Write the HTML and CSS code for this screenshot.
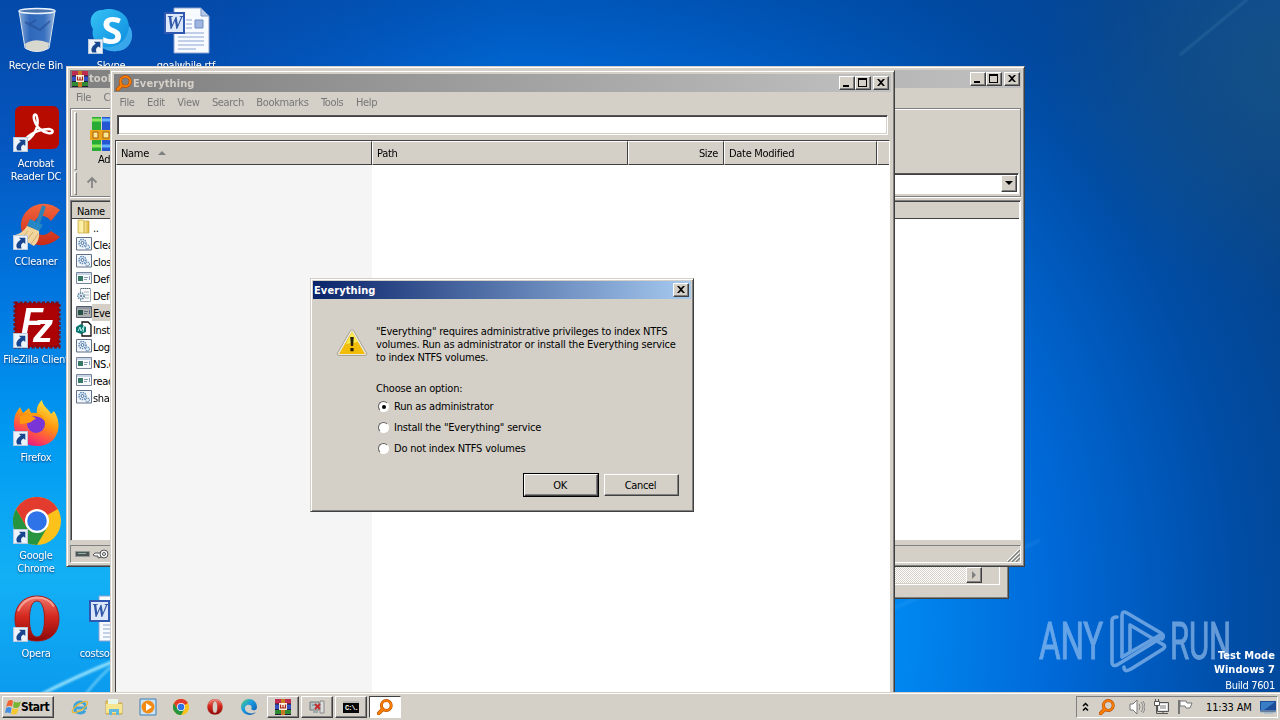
FILE: index.html
```
<!DOCTYPE html>
<html lang="en">
<head>
    <meta charset="UTF-8">
    <meta name="viewport" content="width=device-width, initial-scale=1.0">
    <title>Everything</title>
    <link rel="stylesheet" href="styles.css">
</head>
<body>
    <!-- Shared icons -->
    <svg class="defs" width="0" height="0">
        <defs>
            <linearGradient id="red" x1="0" y1="0" x2="0" y2="1"><stop offset="0" stop-color="#f07a6c"/><stop offset=".45" stop-color="#d5291f"/><stop offset="1" stop-color="#8b0808"/></linearGradient>
            <linearGradient id="orange" x1="0" y1="0" x2="0" y2="1"><stop offset="0" stop-color="#f2653d"/><stop offset="1" stop-color="#c92a17"/></linearGradient>
            <linearGradient id="sky" x1="0" y1="0" x2="1" y2="1"><stop offset="0" stop-color="#35c3f5"/><stop offset="1" stop-color="#0a86dc"/></linearGradient>
            <linearGradient id="glass" x1="0" y1="0" x2="1" y2="0"><stop offset="0" stop-color="#a9c3e4" stop-opacity=".85"/><stop offset=".3" stop-color="#4d7cc4" stop-opacity=".6"/><stop offset=".7" stop-color="#5d8acb" stop-opacity=".6"/><stop offset="1" stop-color="#c2d4ea" stop-opacity=".8"/></linearGradient>
            <linearGradient id="fire" x1=".8" y1="0" x2=".3" y2="1"><stop offset="0" stop-color="#fff04d"/><stop offset=".45" stop-color="#ff980e"/><stop offset=".75" stop-color="#ff4a4f"/><stop offset="1" stop-color="#e31587"/></linearGradient>
            <linearGradient id="gold" x1="0" y1="0" x2="1" y2="0"><stop offset="0" stop-color="#f8e690"/><stop offset=".5" stop-color="#fff6b8"/><stop offset="1" stop-color="#d9ae2d"/></linearGradient>
            <linearGradient id="edge" x1="0" y1="0" x2="1" y2="1"><stop offset="0" stop-color="#56d364"/><stop offset=".4" stop-color="#1b9de2"/><stop offset="1" stop-color="#0c52a5"/></linearGradient>
        </defs>
        <symbol id="shortcut" viewBox="0 0 14 14">
            <path d="M.5.5h13v13H.5z" fill="#edf3fa" stroke="#bac9dc"/>
            <path d="M5.500 2.500h6V8.500L9.900 7C7.500 8 7 10 8 12.500H4C2 9.500 4 6.500 7.300 4.500z" fill="#17468f"/>
        </symbol>
        <symbol id="magnifier" viewBox="0 0 16 16">
            <path d="M5.400 10.600 1.800 14.300" stroke="#b84d00" stroke-width="3.800" stroke-linecap="round"/>
            <circle cx="9.300" cy="6.500" r="4.900" fill="none" stroke="#b84d00" stroke-width="3"/>
            <path d="M5.400 10.600 1.800 14.300" stroke="#ff8000" stroke-width="2.400" stroke-linecap="round"/>
            <circle cx="9.300" cy="6.500" r="4.900" fill="none" stroke="#ff8000" stroke-width="1.800"/>
        </symbol>
        <symbol id="winrar" viewBox="0 0 16 16">
            <path d="M0 0h16v5H0z" fill="#c02c50"/><path d="M0 5h16v5H0z" fill="#354fc0"/><path d="M0 11h16v5H0z" fill="#2f8a35"/>
            <path d="M0 4.500h16v1H0zM0 10h16v1H0zM0 15h16v1H0z" fill="#251b32"/>
            <path d="M6 0h4v16H6z" fill="#c87a23"/><path d="M4 4h8v7H4z" fill="#fbf1dc"/><path d="M5.500 5.500V9h5V5.500M8 6v3" fill="none" stroke="#a3231b" stroke-width="1.200"/>
        </symbol>
        <symbol id="chrome" viewBox="0 0 48 48">
            <circle cx="24" cy="24" r="24" fill="#fbc21b"/>
            <path d="M24 24 3.200 12A24 24 0 0 1 44.800 12z" fill="#e33b2e"/>
            <path d="M3.200 12A24 24 0 0 0 24 48L34.400 30 24 24 13.600 30z" fill="#27943f"/>
            <path d="M3.200 12H24v12L13.600 30z" fill="#e33b2e"/>
            <circle cx="24" cy="24" r="12" fill="#fff"/><circle cx="24" cy="24" r="9.800" fill="#2f73e8"/>
        </symbol>
        <symbol id="opera" viewBox="0 0 48 48">
            <path fill-rule="evenodd" d="M24 1C10 1 2 11 2 24s8 22 22 22 22-9 22-22S38 1 24 1zm0 5c5 0 7.500 7 7.500 18S29 42 24 42s-7.500-7-7.500-18S19 6 24 6z" fill="url(#red)" stroke="#a71813"/>
            <path d="M5 16Q10 4 23 2.500q13 0 18 9" fill="none" stroke="#ffc8bf" stroke-width="2" opacity=".6"/>
        </symbol>
        <symbol id="word" viewBox="0 0 48 48">
            <path d="M11 1h27l8 8v37H11z" fill="#f7faff" stroke="#8da3cf"/><path d="M38 1v8h8z" fill="#b4c8e8" stroke="#7c94c2"/>
            <path d="M32 13h8v8h-8z" fill="#9eb6df" stroke="#6f8cc4"/><path d="M23 13h6M23 17h6M23 21h6M15 26h26M15 30h26M15 34h26M15 38h26M15 42h18" stroke="#8ba4d0"/>
            <path d="M2 6h19v20H2z" fill="#dce7fa" stroke="#3158b0" stroke-width="2"/>
            <text x="11.500" y="22" class="word-w">W</text>
        </symbol>
        <symbol id="gears" viewBox="0 0 16 14">
            <path d="M.5.5h15v12.500H.5z" fill="#f3f7fb" stroke="#5f6f88"/>
            <circle cx="6.500" cy="6" r="3.500" fill="none" stroke="#5c86b5" stroke-width="1.500" stroke-dasharray="1.500 .8"/><circle cx="6.500" cy="6" r="1.500" fill="none" stroke="#416d9e"/>
            <circle cx="11.500" cy="10" r="2" fill="#dcecf8" stroke="#416d9e" stroke-dasharray="1.200 .6"/>
        </symbol>
        <symbol id="exe" viewBox="0 0 16 14">
            <path d="M.5 1.500h15v11H.5z" fill="#f7f9fb" stroke="#77859c"/><path d="M1 2h14v2H1z" fill="#cad6e6"/>
            <path d="M2 5h5v5H2z" fill="#367767"/><path d="M8 6.500h4M8 8.500h3M13.500 5v4" stroke="#8ba0b5"/>
        </symbol>
        <symbol id="ini" viewBox="0 0 16 16">
            <path d="M4.500 1.500h10v13h-10z" fill="#f9fafb" stroke="#9ca7b2"/><path d="M5 1.500h9" stroke="#566" stroke-dasharray="1 1"/>
            <path d="M8 5h5M9 8h4M9 11h4" stroke="#a5b2bf"/><circle cx="5" cy="9" r="3" fill="#e6f3f8" stroke="#6c93a7" stroke-width="2" stroke-dasharray="1.300 .8"/><circle cx="5" cy="9" r="1" fill="#668"/>
        </symbol>
        <symbol id="minimize" viewBox="0 0 12 10"><path d="M2 7h6v2H2z"/></symbol>
        <symbol id="maximize" viewBox="0 0 12 10"><path d="M1 0h9v9H1zM2 2v6h7V2z" fill-rule="evenodd"/></symbol>
        <symbol id="close" viewBox="0 0 12 10"><path d="M2 1h2l2 2 2-2h2L7 4.500 10 8H8L6 6 4 8H2l3-3.500z"/></symbol>
    </svg>

    <div class="desktop">
        <svg class="wallpaper" viewBox="0 0 1280 720">
            <defs>
                <radialGradient id="glow" gradientUnits="userSpaceOnUse" cx="480" cy="620" r="900"><stop offset="0" stop-color="#14b0f8"/><stop offset=".45" stop-color="#008af2"/><stop offset=".64" stop-color="#0069d8"/><stop offset=".84" stop-color="#004da6"/><stop offset="1" stop-color="#064288"/></radialGradient>
                <linearGradient id="left" x1="0" y1="0" x2="0" y2="1"><stop offset="0" stop-color="#064db0"/><stop offset=".2" stop-color="#0556c0"/><stop offset=".4" stop-color="#0075de"/><stop offset=".6" stop-color="#0099f1"/><stop offset=".8" stop-color="#13b0f5"/><stop offset="1" stop-color="#0996ed"/></linearGradient>
                <linearGradient id="top" x1="0" y1="0" x2="0" y2="1"><stop offset="0" stop-color="#0046a0" stop-opacity=".4"/><stop offset="1" stop-color="#0046a0" stop-opacity="0"/></linearGradient>
                <linearGradient id="fade" x1="0" y1="0" x2="1" y2="0"><stop offset="0" stop-color="#fff"/><stop offset=".4" stop-color="#fff"/><stop offset="1" stop-color="#000"/></linearGradient>
                <mask id="leftMask"><path d="M0 0h500v720H0z" fill="url(#fade)"/></mask>
                <radialGradient id="corner" gradientUnits="userSpaceOnUse" cx="1280" cy="60" r="240"><stop offset="0" stop-color="#1b5684" stop-opacity=".7"/><stop offset="1" stop-color="#1b5684" stop-opacity="0"/></radialGradient>
                <filter id="soft"><feGaussianBlur stdDeviation="1"/></filter>
            </defs>
            <path d="M0 0h1280v720H0z" fill="url(#glow)"/>
            <path d="M0 0h500v720H0z" fill="url(#left)" mask="url(#leftMask)"/>
            <path d="M0 0h1280v150H0z" fill="url(#top)"/>
            <path d="M1030 0h250v320h-250z" fill="url(#corner)"/>
            <g fill="none" stroke="#b8f2ff" filter="url(#soft)">
                <path d="M40 695Q75 677 112 662" stroke-width="3" opacity=".8"/>
                <path d="M85 695Q98 678 114 664" stroke-width="2" opacity=".6"/>
                <path d="M1180 55 1250-3" stroke-width="2" opacity=".15"/>
                <path d="M890 610Q960 580 1040 540" stroke-width="4" opacity=".07"/>
            </g>
        </svg>

        <div class="icons">
            <div class="shortcut c1 r1">
                <svg viewBox="0 0 48 48"><path d="M6 3h36l-6 38q-12 8-24 0z" fill="url(#glass)"/><path d="M12 37q10-7 24-1l-1 6q-11 6-22 0z" fill="#d9d8cf"/><ellipse cx="24" cy="4" rx="18" ry="2.500" fill="#4c75ad" stroke="#e9f4ff" stroke-width="1.400"/><path d="m6 4 6 37q12 7 24 0l6-37" fill="none" stroke="#d9e4ee"/><path d="m12 15 15 8 10-9M15 18l8-5" stroke="#244c93" stroke-width="2" fill="none" opacity=".6"/></svg>
                <span>Recycle Bin</span>
            </div>
            <div class="shortcut c2 r1">
                <svg viewBox="0 0 48 48"><path d="M15 3C22 0 40 3 41 19c7 8 2 25-12 25C14 46 2 33 5 22-1 13 5 2 15 3z" fill="url(#sky)"/><path d="M41 19c7 8 2 25-12 25-6 1-11-1-15-4 15 2 26-6 27-21z" fill="#52b5f2" opacity=".6"/><text x="24" y="37" class="skype-s">S</text><use href="#shortcut" y="32" width="15" height="15"/></svg>
                <span>Skype</span>
            </div>
            <div class="shortcut c3 r1"><svg><use href="#word"/></svg><span>goalwhile.rtf</span></div>
            <div class="shortcut c1 r2">
                <svg viewBox="0 0 48 48"><rect x="2" y="1" width="44" height="43" rx="6" fill="#b70b00"/><path d="M15 35c8-6 11-16 9-23-1-4-4-3-3 2 2 9 9 13 14 14 6 1 6-3 1-4-7 0-15 3-19 6-5 3-6 7-2 5z" fill="none" stroke="#fff" stroke-width="2.500"/><use href="#shortcut" y="32" width="15" height="15"/></svg>
                <span>Acrobat<br>Reader DC</span>
            </div>
            <div class="shortcut c1 r3">
                <svg viewBox="0 0 48 48"><path d="M47 7C34-5 11 1 8 20c-2 19 21 31 39 14l-9-6c-8 8-17 3-17-6 1-9 10-13 17-4z" fill="url(#orange)"/><path d="M31 3 25 20" stroke="#2d83b8" stroke-width="4"/><path d="M17 16 30 22 26 28 14 23z" fill="#2588c4"/><path d="m14 23 12 5q1 10-5 15L2 32q8-2 12-9z" fill="#f1d59c"/><path d="m15 28-6 7m11-6-6 8m11-6-7 10" stroke="#d2ac70"/><use href="#shortcut" y="32" width="15" height="15"/></svg>
                <span>CCleaner</span>
            </div>
            <div class="shortcut c1 r4">
                <svg viewBox="0 0 48 48"><path d="M2 2h44v44H2z" fill="#ad0205" stroke="#830b14" stroke-width="3" stroke-dasharray="3 1.500"/><text x="8" y="33" class="fz">F</text><text x="20" y="41" class="fz small">z</text><use href="#shortcut" y="32" width="15" height="15"/></svg>
                <span>FileZilla Client</span>
            </div>
            <div class="shortcut c1 r5">
                <svg viewBox="0 0 48 48"><path d="M3 14 7 8l3 6 6-5 2 5 6 1c-1-7 2-11 5-14 1 7 7 9 9 14l3-3c10 15 3 35-17 35C4 47-3 29 3 14z" fill="url(#fire)"/><circle cx="23" cy="25" r="9" fill="#7a35d7"/><path d="M7 17q11-3 16 3c-4 1-5 4-8 4l-8 1zM17 14q12-2 16 9-5-6-13-6z" fill="#ff9a0e"/><use href="#shortcut" y="32" width="15" height="15"/></svg>
                <span>Firefox</span>
            </div>
            <div class="shortcut c1 r6">
                <svg viewBox="0 0 48 48"><use href="#chrome"/><use href="#shortcut" y="32" width="15" height="15"/></svg>
                <span>Google<br>Chrome</span>
            </div>
            <div class="shortcut c1 r7">
                <svg viewBox="0 0 48 48"><use href="#opera"/><use href="#shortcut" y="32" width="15" height="15"/></svg>
                <span>Opera</span>
            </div>
            <div class="shortcut c2 r7"><svg><use href="#word"/></svg><span>costsoldier.rtf</span></div>
        </div>

        <!-- Watermark -->
        <svg class="watermark" viewBox="0 0 196 66">
            <text x="0" y="51" textLength="64" lengthAdjust="spacingAndGlyphs">ANY</text>
            <text x="131" y="51" textLength="61" lengthAdjust="spacingAndGlyphs">RUN</text>
            <g fill="none" stroke="#a9cdf5" stroke-width="3.600" stroke-linejoin="round" stroke-linecap="round">
                <path d="M78 9q-5 0-5 4v41q0 5 5 3l44-27"/>
                <path d="M83 48V8q0-6 5-3l34 20q4 3 1 6"/>
                <path d="M83 49 121 27M85 59q0 6 7 2l32-20q4-3-1-5L91 17v27"/>
            </g>
        </svg>
        <div class="build">
            <strong>Test Mode</strong>
            <strong>Windows 7</strong>
            <span>Build 7601</span>
        </div>

        <!-- Console window at the back -->
        <div class="window console">
            <div class="console-body">
                <div class="scrollbar"><span class="button scroll-right"></span></div>
            </div>
        </div>

        <!-- WinRAR -->
        <div class="window rar">
            <div class="titlebar">
                <svg class="title-icon"><use href="#winrar"/></svg>
                <span class="title">tools</span>
                <div class="controls">
                    <span class="button"><svg><use href="#minimize"/></svg></span>
                    <span class="button"><svg><use href="#maximize"/></svg></span>
                    <span class="button close"><svg><use href="#close"/></svg></span>
                </div>
            </div>
            <div class="menu"><span>File</span><span>Commands</span></div>
            <div class="rar-tools">
                <div class="rar-buttons">
                    <i class="grip"></i>
                    <div class="tool">
                        <svg width="34" height="34" viewBox="0 0 34 34"><path d="M2 0h9v34H2z" fill="#29ac35"/><path d="M12 0h9v34h-9z" fill="#2457d1"/><path d="M22 0h9v34h-9z" fill="#b93435"/><path d="M2 3h9M2 29h9" stroke="#8be85c" stroke-width="3"/><path d="M12 3h9M12 29h9" stroke="#64b4ff" stroke-width="3"/><path d="M0 13h34v10H0z" fill="#eda51c"/><path d="M3 15h5v6H3zM13 15h6v6h-6z" fill="#ffe794" stroke="#a65c0b"/></svg>
                        <span>Add</span>
                    </div>
                </div>
                <div class="rar-address">
                    <i class="grip"></i>
                    <svg width="14" height="14" viewBox="0 0 14 14"><path d="M7 12V2M2.500 6.500 7 2l4.500 4.500" fill="none" stroke="#858585" stroke-width="1.800"/></svg>
                    <div class="combo"><span class="button"></span></div>
                </div>
            </div>
            <div class="rar-list">
                <div class="rar-head">Name</div>
                <div class="file"><svg viewBox="0 0 16 16"><path d="M2 1h5l1 1h5v12H2z" fill="url(#gold)" stroke="#c6a537" stroke-width=".7"/><path d="M8 2v12" stroke="#c9a233"/></svg><span>..</span></div>
                <div class="file"><svg><use href="#gears"/></svg><span>CleanUp.bat</span></div>
                <div class="file"><svg><use href="#gears"/></svg><span>close.bat</span></div>
                <div class="file"><svg><use href="#exe"/></svg><span>Defender.exe</span></div>
                <div class="file"><svg><use href="#ini"/></svg><span>Defender.ini</span></div>
                <div class="file selected"><svg><use href="#exe"/></svg><span>Everything.exe</span></div>
                <div class="file"><svg viewBox="0 0 16 16"><path d="M6 1h6l3 3v11H6z" fill="#fff" stroke="#111" stroke-width="1.300"/><path d="M0 6 5 3l5 3v5l-5 2-5-2z" fill="#077570"/><path d="m2 10 2-4 1 4 3-5-1 6" fill="none" stroke="#b8f2eb"/></svg><span>Install.bat</span></div>
                <div class="file"><svg><use href="#gears"/></svg><span>Logs.bat</span></div>
                <div class="file"><svg><use href="#exe"/></svg><span>NS.exe</span></div>
                <div class="file"><svg><use href="#exe"/></svg><span>read.exe</span></div>
                <div class="file"><svg><use href="#gears"/></svg><span>shadow.bat</span></div>
            </div>
            <div class="rar-status">
                <svg width="36" height="12" viewBox="0 0 36 12"><path d="M.5 3.500h14v5H.5z" fill="#4b5555" stroke="#929999"/><path d="M3 5.500h8" stroke="#8eb3a1"/><path d="M27 5h-7l-2 2 2 1h3v2l4-1" fill="#f7f7f7" stroke="#555"/><circle cx="29" cy="6" r="4" fill="#f5f5f5" stroke="#555"/><circle cx="29" cy="6" r="1.500" fill="none" stroke="#555"/></svg>
                <svg class="resize" width="13" height="13" viewBox="0 0 13 13"><path d="m1 13 12-12M5 13l8-8M9 13l4-4" stroke="#808080" stroke-width="1.300"/><path d="m0 12 12-12M4 12l8-8M8 12l4-4" stroke="#fff"/></svg>
            </div>
        </div>

        <!-- Everything -->
        <div class="window everything">
            <div class="titlebar">
                <svg class="title-icon"><use href="#magnifier"/></svg>
                <span class="title">Everything</span>
                <div class="controls">
                    <span class="button"><svg><use href="#minimize"/></svg></span>
                    <span class="button"><svg><use href="#maximize"/></svg></span>
                    <span class="button close"><svg><use href="#close"/></svg></span>
                </div>
            </div>
            <div class="menu"><span>File</span><span>Edit</span><span>View</span><span>Search</span><span>Bookmarks</span><span>Tools</span><span>Help</span></div>
            <div class="search"></div>
            <div class="results">
                <div class="columns">
                    <span>Name <i class="sort"></i></span>
                    <span>Path</span>
                    <span class="size">Size</span>
                    <span>Date Modified</span>
                    <span></span>
                </div>
                <div class="rows"></div>
            </div>
        </div>

        <!-- Message box -->
        <div class="window dialog">
            <div class="titlebar active">
                <span class="title">Everything</span>
                <div class="controls"><span class="button close"><svg><use href="#close"/></svg></span></div>
            </div>
            <div class="dialog-body">
                <svg class="warning" viewBox="0 0 32 30">
                    <path d="M14.500 2.500q1.500-2 3 0L30.500 25q1 2.500-1.500 2.500H3Q.5 27.500 1.500 25z" fill="#e9e8e2" stroke="#aaa391"/>
                    <path d="M16 3.500 29 26H3z" fill="#f2bd08"/><path d="m16 4 6 10-12 2z" fill="#fcec54"/><path d="M14.200 9h3.600l-.7 9h-2.200zM14.400 20h3.200v3.200h-3.200z" fill="#28220c"/>
                </svg>
                <div class="message">
                    <p>"Everything" requires administrative privileges to index NTFS<br>volumes. Run as administrator or install the Everything service<br>to index NTFS volumes.</p>
                    <p class="choose">Choose an option:</p>
                    <div class="option"><i class="radio checked"></i><span>Run as administrator</span></div>
                    <div class="option"><i class="radio"></i><span>Install the "Everything" service</span></div>
                    <div class="option"><i class="radio"></i><span>Do not index NTFS volumes</span></div>
                </div>
            </div>
            <div class="actions">
                <span class="push default"><b class="button">OK</b></span>
                <span class="push"><b class="button">Cancel</b></span>
            </div>
        </div>
    </div>

    <div class="taskbar">
        <div class="button start">
            <svg width="16" height="16" viewBox="0 0 16 16"><path d="M3 2q3-2 5 0L7 7.500Q4 6 1 8z" fill="#ee6532"/><path d="M9 2.500q3 2 7 0l-2 5.500q-3 2-6 0z" fill="#79b532"/><path d="M1 9q3-2 5.500 0l-1 5.500Q3 13 0 14z" fill="#438ee0"/><path d="M7.500 9q3 2 6 0L12 14.500q-3 2-6 0z" fill="#f6c62f"/></svg>
            <strong>Start</strong>
        </div>
        <div class="quick">
            <svg viewBox="0 0 18 18"><path d="M3.500 10h11Q15 4 9 4 3.500 5 3.500 10q0 5 6 5 3 0 4.500-2.500" fill="none" stroke="#3ba3dc" stroke-width="2.800"/><ellipse cx="9" cy="9" rx="9" ry="3.200" transform="rotate(-34 9 9)" fill="none" stroke="#e8b938" stroke-width="1.300"/></svg>
            <svg viewBox="0 0 18 18"><path d="M1 3h6l1 2h9v11H1z" fill="#e7c75d" stroke="#c8a647"/><path d="M3 1h10v5H3z" fill="#e9f7ea"/><path d="M1 6h16v9H1z" fill="#f8e58f"/><path d="M4 17v-6h10v6h-3v-3H7v3z" fill="#63b8de"/></svg>
            <svg viewBox="0 0 18 18"><path d="M1 1h16v16H1z" fill="#cbe2f3" stroke="#397fb5"/><circle cx="9" cy="9" r="6.500" fill="#f38b12"/><path d="m7 5 6 4-6 4z" fill="#fff"/></svg>
            <svg viewBox="-1 -1 20 20"><use href="#chrome" width="18" height="18"/></svg>
            <svg viewBox="-1 -1 20 20"><use href="#opera" width="18" height="18"/></svg>
            <svg viewBox="0 0 18 18"><path d="M1 9a8 8 0 0 1 16 0c0 4-4 4-6 2 2-3-1-5-4-4-4 2-2 7 2 8 3 1 5 0 7-1-5 6-15 2-15-5z" fill="url(#edge)"/></svg>
        </div>
        <div class="tasks">
            <span class="button"><svg viewBox="0 0 16 16"><use href="#winrar"/></svg></span>
            <span class="button"><svg viewBox="0 0 16 16"><path d="M1 3h9v8H1z" fill="#b5c4c5" stroke="#777"/><path d="M11 2h4v12h-4z" fill="#ddd" stroke="#888"/><path d="M4 13h5M3 6h5" stroke="#688"/><path d="m6 5 5 5m0-5-5 5" stroke="#c72929" stroke-width="1.800"/></svg></span>
            <span class="button"><svg viewBox="0 0 16 16"><path d="M0 2h16v12H0z" fill="#050505"/><path d="M0 2h16v2H0z" fill="#bbb"/><text x="2" y="11" class="cmd">C:\.</text></svg></span>
            <span class="button pressed"><svg viewBox="0 0 16 16"><use href="#magnifier"/></svg></span>
        </div>
        <div class="tray">
            <svg class="chevron" viewBox="0 0 7 10"><path d="m1 4 2.500-2.500L6 4M1 8.500 3.500 6 6 8.500" fill="none" stroke="#000" stroke-width="1.500"/></svg>
            <svg class="tray-search"><use href="#magnifier"/></svg>
            <svg class="sound" viewBox="0 0 16 16"><path d="M1 5h3l4-4v14l-4-4H1z" fill="#fff" stroke="#777"/><path d="M10 5q2 3 0 6m2-8q4 5 0 10m2-11q4 6 0 12" fill="none" stroke="#858585"/></svg>
            <svg class="network" viewBox="0 0 16 16"><path d="M4.500 3.500h11v9h-11z" fill="#ddd" stroke="#555"/><path d="M6.500 5.500h7v5h-7z" fill="#bbb" stroke="#fff"/><path d="M10 12.500v2M6 14.500h9M3.500 6v8.500H7" fill="none" stroke="#555"/><path d="M1.500 2.500h5v4h-5zM2.500 0v2m3-2v2" fill="#fff" stroke="#555"/></svg>
            <svg class="flag" viewBox="0 0 16 16"><path d="M2 1v14" stroke="#777" stroke-width="2"/><path d="M3 2h6l1 2h5l-2 5H9L8 7H3z" fill="#fff" stroke="#777"/></svg>
            <span class="clock">11:33 AM</span>
            <svg class="show-desktop" viewBox="0 0 16 14"><path d="M0 1h16v10H0z" fill="#1d4d98"/><path d="M1 2h14L4 10H1z" fill="#397dc7"/><path d="M0 11h16v1H0zM4 13h9" stroke="#8eaac7"/></svg>
        </div>
    </div>
</body>
</html>
```
FILE: styles.css
```
* {
    margin: 0;
    padding: 0;
    box-sizing: border-box;
}

body {
    width: 1280px;
    height: 720px;
    overflow: hidden;
    display: flex;
    flex-direction: column;
    font-family: "DejaVu Sans Condensed", "DejaVu Sans", sans-serif;
    font-stretch: condensed;
    font-size: 11px;
    line-height: 13px;
    letter-spacing: -0.35px;
    color: #000;
    background: #0065ca;
}

.defs {
    position: absolute;
}

.desktop {
    position: relative;
    height: 692px;
    overflow: hidden;
}

.wallpaper {
    position: absolute;
    top: 0;
    left: 0;
    width: 1280px;
    height: 720px;
}

/* Desktop icons */
.icons {
    position: relative;
    display: grid;
    grid-template-columns: repeat(3, 75px);
    grid-template-rows: repeat(7, 98px);
    padding-top: 7px;
    margin-left: -1.5px;
}

.shortcut {
    display: flex;
    flex-direction: column;
    align-items: center;
    gap: 4px;
    color: #fff;
    text-align: center;
    white-space: nowrap;
    letter-spacing: -0.25px;
    text-shadow: 0 1px 2px #00377a;
}

.shortcut svg {
    width: 48px;
    height: 48px;
    margin-left: 2px;
}

.c1 { grid-column: 1; }
.c2 { grid-column: 2; }
.c3 { grid-column: 3; }
.r1 { grid-row: 1; }
.r2 { grid-row: 2; }
.r3 { grid-row: 3; }
.r4 { grid-row: 4; }
.r5 { grid-row: 5; }
.r6 { grid-row: 6; }
.r7 { grid-row: 7; }

.c2.r7 {
    letter-spacing: -0.3px;
}

.word-w {
    font: italic bold 18px "Liberation Serif", serif;
    letter-spacing: 0;
    fill: #3158a8;
    text-anchor: middle;
}

.skype-s {
    font: bold 38px "Open Sans", sans-serif;
    letter-spacing: 0;
    fill: #fff;
    text-anchor: middle;
}

.skype-s,
.word-w,
.fz {
    text-shadow: none;
}

.fz {
    font: italic bold 36px "Liberation Sans", sans-serif;
    fill: #fff;
}

.fz.small {
    font-size: 40px;
}

.watermark {
    position: absolute;
    left: 1039px;
    top: 608px;
    width: 196px;
    height: 66px;
    opacity: 0.6;
}

.watermark text {
    font: 52px Roboto, sans-serif;
    fill: #a9cdf5;
    stroke: #a9cdf5;
    stroke-width: 1px;
}

.build {
    position: absolute;
    right: 5px;
    top: 648.5px;
    display: flex;
    flex-direction: column;
    align-items: flex-end;
    line-height: 14px;
    color: #fff;
}

.build strong {
    letter-spacing: 0.05px;
}

.build span {
    margin-top: 2px;
}

/* Windows */
.window {
    position: absolute;
    background: #d4d0c8;
    border: 1px solid;
    border-color: #d4d0c8 #404040 #404040 #d4d0c8;
    box-shadow: inset 1px 1px #fff, inset -1px -1px #808080;
    padding: 3px;
}

.button {
    display: flex;
    align-items: center;
    justify-content: center;
    background: #d4d0c8;
    border: 1px solid;
    border-color: #fff #404040 #404040 #fff;
    box-shadow: inset -1px -1px #808080;
    font-weight: normal;
}

.titlebar {
    display: flex;
    align-items: center;
    height: 18px;
    background: linear-gradient(90deg, #808080, #c0c0c0);
    color: #d4d0c8;
}

.titlebar.active {
    background: linear-gradient(90deg, #0a246a, #a6caf0);
    color: #fff;
}

.title-icon {
    width: 16px;
    height: 16px;
    margin: 0 1px 0 2px;
}

.title {
    font-weight: bold;
    letter-spacing: 0.1px;
}

.controls {
    display: flex;
    margin-left: auto;
    padding-right: 2px;
}

.controls .button {
    width: 16px;
    height: 14px;
}

.controls .close {
    margin-left: 2px;
}

.controls svg {
    width: 12px;
    height: 10px;
}

.menu {
    display: flex;
    align-items: center;
    gap: 12.5px;
    height: 20px;
    padding-left: 5.5px;
    color: #777;
}

/* Console */
.console {
    left: 500px;
    top: 300px;
    width: 509px;
    height: 299px;
}

.console-body {
    display: flex;
    align-items: flex-end;
    width: 496px;
    height: 281px;
    border: 1px solid #fff;
}

.scrollbar {
    display: flex;
    justify-content: flex-end;
    width: 477px;
    height: 16px;
    margin-bottom: 1px;
    background: repeating-conic-gradient(#fff 0 25%, #d4d0c8 0 50%) 0 0 / 2px 2px;
}

.scroll-right {
    width: 16px;
    height: 16px;
}

.scroll-right::before {
    content: '';
    border-left: 4px solid #808080;
    border-top: 4px solid transparent;
    border-bottom: 4px solid transparent;
}

/* WinRAR */
.rar {
    left: 66px;
    top: 66px;
    width: 959px;
    height: 501px;
    display: flex;
    flex-direction: column;
}

.rar .controls {
    padding-right: 1px;
}

.rar .menu {
    padding-left: 6px;
}

.rar-tools {
    height: 89px;
    border: 1px solid #808080;
    box-shadow: inset 1px 1px #fff, 0 1px #fff;
    padding: 3px 1px 3px 3px;
}

.rar-buttons {
    display: flex;
    height: 58px;
}

.grip {
    width: 3px;
    margin-right: 4px;
    border: 1px solid;
    border-color: #fff #808080 #808080 #fff;
}

.tool {
    display: flex;
    flex-direction: column;
    align-items: center;
    gap: 2px;
    padding-top: 5px;
    margin-left: 5px;
    width: 42px;
}

.rar-address {
    display: flex;
    align-items: center;
    height: 23px;
    margin-top: 2px;
    gap: 8px;
}

.rar-address .grip {
    align-self: stretch;
    margin-right: 0;
}

.combo {
    display: flex;
    justify-content: flex-end;
    flex: 1;
    height: 21px;
    margin-left: 20px;
    padding: 1px;
    background: #fff;
    border: 1px solid;
    border-color: #555 #fff #fff #555;
    box-shadow: inset 1px 1px #404040;
}

.combo .button {
    width: 16px;
}

.combo .button::before {
    content: '';
    border-top: 4px solid #000;
    border-left: 4px solid transparent;
    border-right: 4px solid transparent;
}

.rar-list {
    height: 344px;
    margin-top: 3px;
    background: #fff;
    border: 1px solid;
    border-color: #808080 #fff #d4d0c8 #808080;
    box-shadow: inset 1px 1px #404040;
    padding: 1px;
}

.rar-head {
    height: 17px;
    padding: 3px 5px;
    background: #d4d0c8;
    border-bottom: 1px solid #404040;
}

.file {
    display: flex;
    align-items: center;
    width: 140px;
    height: 17px;
    padding-left: 4px;
    gap: 1px;
}

.file svg {
    width: 16px;
    height: 16px;
}

.file span {
    padding-top: 2px;
}

.selected {
    background: linear-gradient(90deg, #fff 20px, #d4d0c8 20px);
}

.selected svg {
    filter: brightness(0.7);
}

.rar-status {
    display: flex;
    align-items: center;
    justify-content: space-between;
    height: 18px;
    margin-top: 4px;
    padding-left: 4px;
    border: 1px solid;
    border-color: #808080 #fff #fff #808080;
}

.resize {
    align-self: flex-end;
}

/* Everything */
.everything {
    left: 110px;
    top: 70px;
    width: 785px;
    height: 640px;
    display: flex;
    flex-direction: column;
}

.search {
    height: 20px;
    margin: 3px 3px 0;
    background: #fff;
    border: 1px solid;
    border-color: #555 #fff #fff #555;
    box-shadow: inset 1px 1px #404040, inset -1px -1px #d4d0c8;
}

.results {
    flex: 1;
    display: flex;
    flex-direction: column;
    margin: 5px 1px 0;
    border: 1px solid #404040;
    border-right-color: #fff;
}

.columns {
    display: grid;
    grid-template-columns: 256px 256px 96px 153px 1fr;
    height: 24px;
    letter-spacing: -0.3px;
}

.columns span {
    display: flex;
    align-items: center;
    padding: 0 5px 0 4px;
    background: #d4d0c8;
    border: 1px solid;
    border-color: #fff #404040 #404040 #fff;
}

.columns span:last-child {
    border-right: 0;
}

.columns .size {
    justify-content: flex-end;
}

.sort {
    margin-left: 9px;
    border-bottom: 4px solid #808080;
    border-left: 4px solid transparent;
    border-right: 4px solid transparent;
}

.rows {
    flex: 1;
    background: linear-gradient(90deg, #f5f5f5 256px, #fff 256px);
}

/* Message box */
.dialog {
    left: 310px;
    top: 278px;
    width: 384px;
    height: 234px;
    padding: 2px;
}

.dialog .title {
    padding-left: 1px;
}

.dialog-body {
    display: flex;
    padding: 26px 0 0 23px;
    letter-spacing: -0.2px;
}

.warning {
    width: 32px;
    height: 30px;
    margin-top: 3px;
}

.message {
    margin-left: 8px;
    white-space: nowrap;
}

.choose {
    margin-top: 18px;
    margin-bottom: 1px;
}

.option {
    display: flex;
    align-items: center;
    gap: 5px;
    height: 21px;
    padding-left: 2px;
}

.radio {
    display: flex;
    align-items: center;
    justify-content: center;
    width: 11px;
    height: 11px;
    border-radius: 50%;
    background: #fff;
    border: 1px solid;
    border-color: #606060 #fff #fff #606060;
}

.checked::before {
    content: '';
    width: 4px;
    height: 4px;
    border-radius: 50%;
    background: #000;
}

.actions {
    display: flex;
    justify-content: flex-end;
    gap: 5px;
    padding: 14px 11px 0 0;
}

.push {
    width: 76px;
    height: 24px;
    border: 1px solid transparent;
    border-left: 0;
    display: flex;
}

.push .button {
    flex: 1;
    padding-right: 2px;
}

.default {
    border: 1px solid #000;
}

/* Taskbar */
.taskbar {
    display: flex;
    align-items: center;
    height: 28px;
    padding: 3px 2px 1px;
    background: #d4d0c8;
    box-shadow: inset 0 1px #d4d0c8, inset 0 2px #fff;
}

.start {
    width: 52px;
    height: 22px;
    padding-right: 2px;
}

.start strong {
    font-size: 12px;
    letter-spacing: -0.5px;
}

.quick {
    display: flex;
    gap: 15.8px;
    margin-left: 17px;
}

.quick svg {
    width: 18px;
    height: 18px;
}

.tasks {
    display: flex;
    gap: 2px;
    margin-left: 9px;
}

.tasks .button {
    width: 32px;
    height: 22px;
}

.tasks svg {
    width: 16px;
    height: 16px;
}

.tasks .pressed {
    background: #fff;
    border-color: #404040 #fff #fff #404040;
    box-shadow: none;
}

.cmd {
    font: bold 7px "Liberation Mono", monospace;
    letter-spacing: -1px;
    fill: #fff;
}

.tray {
    display: flex;
    align-items: center;
    width: 202px;
    height: 22px;
    margin-left: auto;
    padding: 0 1px 0 5px;
    border: 1px solid;
    border-color: #808080 #fff #fff #808080;
}

.tray svg {
    width: 16px;
    height: 16px;
}

.tray .chevron {
    width: 7px;
    height: 10px;
}

.tray-search {
    margin-left: 10px;
}

.sound {
    margin-left: 14px;
}

.network {
    margin-left: 8px;
}

.flag {
    margin-left: 8px;
}

.clock {
    margin-left: 13px;
    letter-spacing: -0.15px;
    white-space: nowrap;
}

.tray .show-desktop {
    margin-left: auto;
}
```
